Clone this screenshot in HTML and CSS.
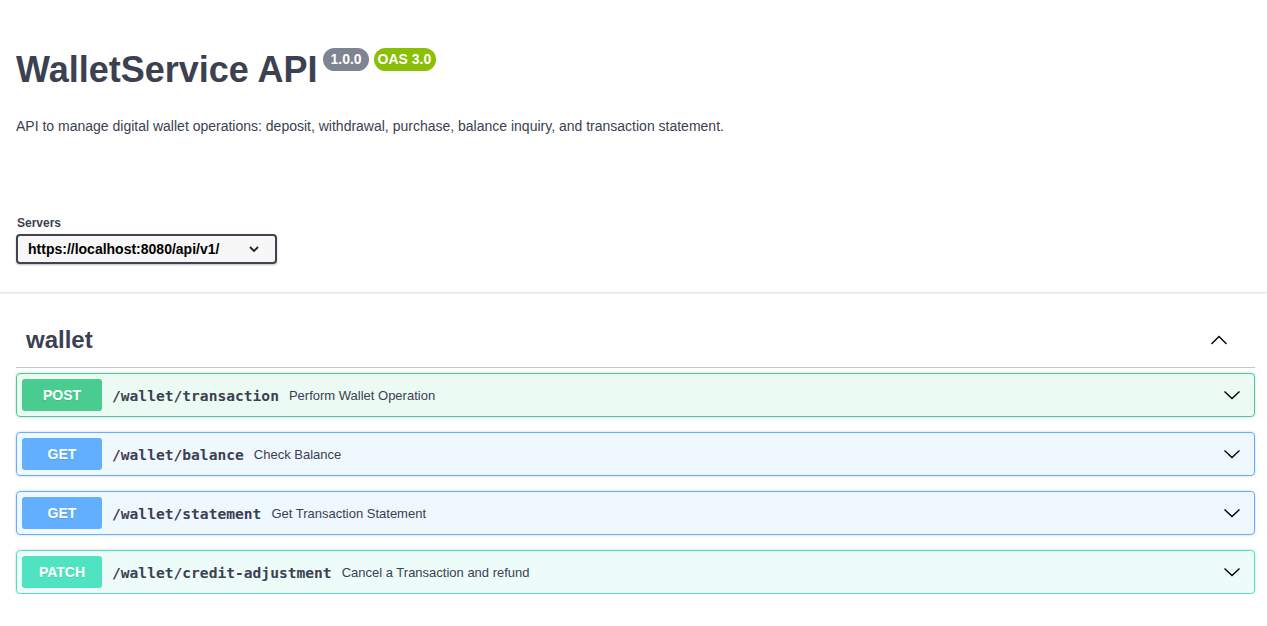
FILE: index.html
```html
<!DOCTYPE html>
<html lang="en">
<head>
<meta charset="utf-8">
<title>WalletService API</title>
<link rel="stylesheet" href="styles.css">
</head>
<body>
<div class="top">
  <div class="wrapper">
    <div class="info">
      <h1 class="title">WalletService API<span class="badges"><span class="badge version">1.0.0</span><span class="badge oas">OAS 3.0</span></span></h1>
      <p class="description">API to manage digital wallet operations: deposit, withdrawal, purchase, balance inquiry, and transaction statement.</p>
    </div>
    <div class="servers">
      <label class="servers-label">Servers</label>
      <div class="select">
        <span>https://localhost:8080/api/v1/</span>
        <svg class="select-arrow" width="12" height="8" viewBox="0 0 12 8"><path d="M2 2 L6 6 L10 2" fill="none" stroke="#222" stroke-width="1.8"/></svg>
      </div>
    </div>
  </div>
</div>
<div class="wrapper">
  <div class="tag">
    <h3 class="tag-name">wallet</h3>
    <svg class="tag-arrow" width="20" height="20" viewBox="0 0 20 20"><path d="M2.5 14 L10 6.5 L17.5 14" fill="none" stroke="#000" stroke-width="1.4"/></svg>
  </div>
  <div class="ops">
    <div class="opblock post">
      <span class="method">POST</span>
      <span class="path">/wallet/transaction</span>
      <span class="summary">Perform Wallet Operation</span>
      <svg class="op-arrow" width="20" height="20" viewBox="0 0 20 20"><path d="M2.5 6.5 L10 13.5 L17.5 6.5" fill="none" stroke="#000" stroke-width="1.4"/></svg>
    </div>
    <div class="opblock get">
      <span class="method">GET</span>
      <span class="path">/wallet/balance</span>
      <span class="summary">Check Balance</span>
      <svg class="op-arrow" width="20" height="20" viewBox="0 0 20 20"><path d="M2.5 6.5 L10 13.5 L17.5 6.5" fill="none" stroke="#000" stroke-width="1.4"/></svg>
    </div>
    <div class="opblock get">
      <span class="method">GET</span>
      <span class="path">/wallet/statement</span>
      <span class="summary">Get Transaction Statement</span>
      <svg class="op-arrow" width="20" height="20" viewBox="0 0 20 20"><path d="M2.5 6.5 L10 13.5 L17.5 6.5" fill="none" stroke="#000" stroke-width="1.4"/></svg>
    </div>
    <div class="opblock patch">
      <span class="method">PATCH</span>
      <span class="path">/wallet/credit-adjustment</span>
      <span class="summary">Cancel a Transaction and refund</span>
      <svg class="op-arrow" width="20" height="20" viewBox="0 0 20 20"><path d="M2.5 6.5 L10 13.5 L17.5 6.5" fill="none" stroke="#000" stroke-width="1.4"/></svg>
    </div>
  </div>
</div>
</body>
</html>
```
FILE: styles.css
```css
* { box-sizing: border-box; }
html, body { margin: 0; padding: 0; background: #fff; }
body {
  font-family: "Liberation Sans", Arial, sans-serif;
  color: #3b4151;
}
.wrapper {
  padding: 0 12px 0 16px;
}
.top {
  box-shadow: 0 1px 2px 0 rgba(0,0,0,.15);
  padding-bottom: 28px;
}
.info {
  padding-top: 49px;
}
.title {
  margin: 0;
  font-size: 36px;
  font-weight: 700;
  line-height: 41px;
  color: #3b4151;
  display: flex;
  align-items: flex-start;
}
.badges {
  display: flex;
  gap: 5px;
  margin-left: 6px;
  margin-top: -1px;
}
.badge {
  display: inline-block;
  font-size: 14px;
  font-weight: 700;
  line-height: 23px;
  height: 23px;
  padding: 0 6px;
  border-radius: 57px;
  color: #fff;
  font-family: "Liberation Sans", Arial, sans-serif;
}
.badge.version { background: #7d8492; padding: 0 7px; }
.badge.oas { background: #89bf04; padding: 0 5px 0 4px; }
.description {
  margin: 28px 0 0;
  font-size: 14px;
  line-height: 16px;
}
.servers {
  margin-top: 82px;
  display: flex;
  flex-direction: column;
}
.servers-label {
  font-size: 12px;
  font-weight: 700;
  line-height: 14px;
  margin-bottom: 4px;
  padding-left: 1px;
}
.select {
  width: 261px;
  height: 30px;
  border: 2px solid #41444e;
  border-radius: 4px;
  background: #f7f7f7;
  box-shadow: 0 1px 2px 0 rgba(0,0,0,.25);
  display: flex;
  align-items: center;
  justify-content: space-between;
  padding: 0 15px 0 10px;
  font-size: 14px;
  font-weight: 700;
  color: #000;
}
.select-arrow { display: block; }
.tag {
  margin-top: 20px;
  height: 56px;
  display: flex;
  align-items: center;
  justify-content: space-between;
  padding: 0 26px 0 10px;
  border-bottom: 1px solid rgba(59,65,81,.3);
}
.tag-name {
  margin: 0;
  font-size: 24px;
  font-weight: 700;
  line-height: 28px;
  color: #3b4151;
}
.tag-arrow { display: block; }
.ops {
  margin-top: 5px;
  display: flex;
  flex-direction: column;
  gap: 15px;
}
.opblock {
  height: 44px;
  border: 1px solid;
  border-radius: 4px;
  padding: 5px 12px 5px 5px;
  display: flex;
  align-items: center;
  box-shadow: 0 0 3px rgba(0,0,0,.19);
}
.method {
  width: 80px;
  height: 32px;
  border-radius: 3px;
  color: #fff;
  font-size: 14px;
  font-weight: 700;
  display: flex;
  align-items: center;
  justify-content: center;
  text-shadow: 0 1px 0 rgba(0,0,0,.1);
}
.path {
  font-family: "DejaVu Sans Mono", monospace;
  font-weight: 700;
  font-size: 14.6px;
  padding: 0 10px;
  color: #3b4151;
}
.summary {
  font-size: 13px;
  color: #3b4151;
  flex: 1;
}
.op-arrow { display: block; }
.post { border-color: #49cc90; background: rgba(73,204,144,.1); }
.post .method { background: #49cc90; }
.get { border-color: #61affe; background: rgba(97,175,254,.1); }
.get .method { background: #61affe; }
.patch { border-color: #50e3c2; background: rgba(80,227,194,.1); }
.patch .method { background: #50e3c2; }
```
